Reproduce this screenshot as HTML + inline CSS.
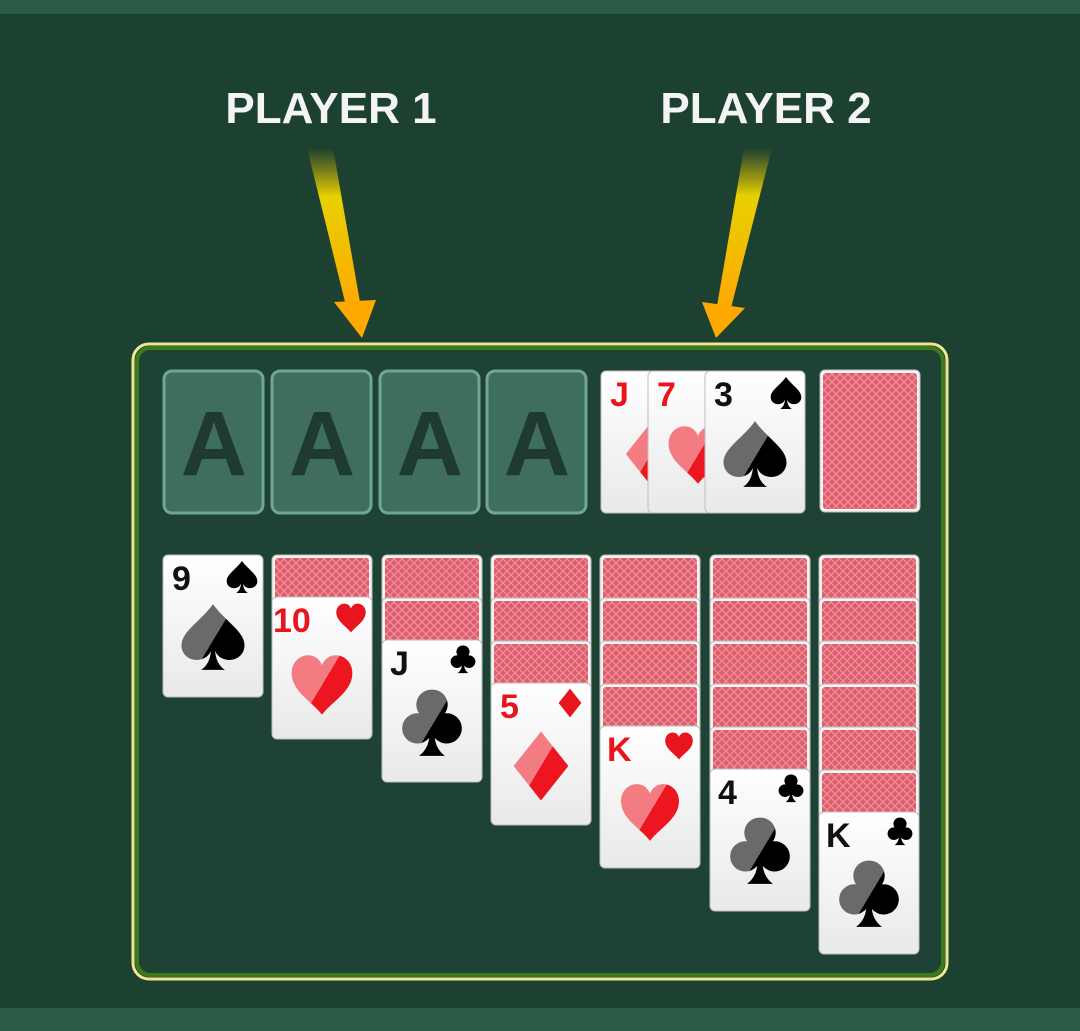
<!DOCTYPE html>
<html><head><meta charset="utf-8"><style>
html,body{margin:0;padding:0;width:1080px;height:1031px;overflow:hidden;background:#1c3f30}
svg{display:block}
.r{font-family:"Liberation Sans",sans-serif;font-weight:bold;font-size:34px}
.rd{fill:#e8141e}.bk{fill:#111}
.pl{font-family:"Liberation Sans",sans-serif;font-weight:bold;font-size:44px;fill:#f4f4f4}
.A{font-family:"Liberation Sans",sans-serif;font-weight:bold;font-size:92px;fill:#1f3a31}
</style></head><body>
<svg width="1080" height="1031" viewBox="0 0 1080 1031" xmlns="http://www.w3.org/2000/svg">
<defs>
<linearGradient id="gb" gradientUnits="userSpaceOnUse" x1="0" y1="25" x2="100" y2="85"><stop offset="0.5" stop-color="#6a6a6a"/><stop offset="0.5" stop-color="#000"/></linearGradient>
<linearGradient id="gr" gradientUnits="userSpaceOnUse" x1="0" y1="20" x2="100" y2="80"><stop offset="0.5" stop-color="#f27c82"/><stop offset="0.5" stop-color="#ec1520"/></linearGradient>
<symbol id="spade" viewBox="0 0 100 100"><path d="M50 3C32 28 5 42 5 62C5 78 22 88 38 80C42 78 45 74 47 70C46 82 42 91 33 97L67 97C58 91 54 82 53 70C55 74 58 78 62 80C78 88 95 78 95 62C95 42 68 28 50 3Z"/></symbol>
<symbol id="heart" viewBox="0 0 100 100"><path d="M50 95C35 75 4 60 4 32C4 15 17 5 29 5C40 5 47 12 50 20C53 12 60 5 71 5C83 5 96 15 96 32C96 60 65 75 50 95Z"/></symbol>
<symbol id="diamond" viewBox="0 0 100 100"><path d="M50 2L88 50L50 98L12 50Z"/></symbol>
<symbol id="club" viewBox="0 0 100 100"><path d="M50 5A21 21 0 0 1 68 38A21 21 0 1 1 54 72C55 82 59 90 68 97L32 97C41 90 45 82 46 72A21 21 0 1 1 32 38A21 21 0 0 1 50 5Z"/></symbol>
<linearGradient id="face" x1="0" y1="0" x2="0" y2="1"><stop offset="0" stop-color="#fff"/><stop offset="1" stop-color="#e9e9e9"/></linearGradient>
<pattern id="hatch" width="8" height="8" patternUnits="userSpaceOnUse"><rect width="8" height="8" fill="#de5d6c"/><path d="M0 0L8 8M8 0L0 8" stroke="#f0909b" stroke-width="1.2"/></pattern>
<linearGradient id="ar" x1="0" y1="0" x2="0" y2="1"><stop offset="0" stop-color="#d8c000" stop-opacity="0"/><stop offset="0.3" stop-color="#e8d000"/><stop offset="1" stop-color="#ffa800"/></linearGradient>
<g id="back"><rect width="100" height="142" rx="5" fill="#f4f4f4" stroke="#bbb"/><rect x="3" y="3" width="94" height="136" rx="3" fill="url(#hatch)"/></g>
<g id="fc"><rect width="100" height="142" rx="5" fill="url(#face)" stroke="#bdbdbd"/></g>
</defs>
<rect width="1080" height="1031" fill="#1d4131"/>
<rect width="1080" height="14" fill="#2b5c47"/>
<rect y="1008" width="1080" height="23" fill="#2b5c47"/>
<text class="pl" x="331" y="123" text-anchor="middle">PLAYER 1</text>
<text class="pl" x="766" y="123" text-anchor="middle">PLAYER 2</text>
<polygon points="307,148 333,148 361,308 347,310" fill="url(#ar)"/>
<polygon points="334,302 376,300 362,338" fill="#ffa800"/>
<polygon points="744,148 772,148 731,308 717,306" fill="url(#ar)"/>
<polygon points="702,302 745,308 716,338" fill="#ffa800"/>
<rect x="133" y="344" width="814" height="635" rx="16" fill="#1e4334" stroke="#f0e68f" stroke-width="3"/>
<rect x="137" y="348" width="806" height="627" rx="13" fill="none" stroke="#3e7a1c" stroke-width="4"/>
<g>
<rect x="164" y="371" width="99" height="142" rx="8" fill="#3f6e5d" stroke="#6fa697" stroke-width="3"/><text class="A" x="214" y="475" text-anchor="middle">A</text>
<rect x="272" y="371" width="99" height="142" rx="8" fill="#3f6e5d" stroke="#6fa697" stroke-width="3"/><text class="A" x="322" y="475" text-anchor="middle">A</text>
<rect x="380" y="371" width="99" height="142" rx="8" fill="#3f6e5d" stroke="#6fa697" stroke-width="3"/><text class="A" x="430" y="475" text-anchor="middle">A</text>
<rect x="487" y="371" width="99" height="142" rx="8" fill="#3f6e5d" stroke="#6fa697" stroke-width="3"/><text class="A" x="537" y="475" text-anchor="middle">A</text>
</g>
<g transform="translate(601,371)"><use href="#fc"/><text class="r rd" x="9" y="35">J</text><use href="#diamond" x="17" y="50" width="66" height="66" fill="url(#gr)"/></g>
<g transform="translate(648,371)"><use href="#fc"/><text class="r rd" x="9" y="35">7</text><use href="#heart" x="14" y="52" width="72" height="64" fill="url(#gr)"/></g>
<g transform="translate(705,371)"><use href="#fc"/><text class="r bk" x="9" y="35">3</text><use href="#spade" x="64" y="5" width="34" height="34" fill="#000"/><use href="#spade" x="15" y="46" width="70" height="74" fill="url(#gb)"/></g>
<use href="#back" x="820" y="370"/>
<g transform="translate(163,555)"><use href="#fc"/><text class="r bk" x="9" y="35">9</text><use href="#spade" x="62" y="5" width="34" height="34" fill="#000"/><use href="#spade" x="15" y="45" width="70" height="74" fill="url(#gb)"/></g>
<use href="#back" x="272" y="555"/>
<g transform="translate(272,597)"><use href="#fc"/><text class="r rd" x="1" y="35">10</text><use href="#heart" x="62" y="5" width="34" height="32" fill="#e8141e"/><use href="#heart" x="14" y="55" width="72" height="66" fill="url(#gr)"/></g>
<use href="#back" x="382" y="555"/><use href="#back" x="382" y="598"/>
<g transform="translate(382,640)"><use href="#fc"/><text class="r bk" x="8" y="35">J</text><use href="#club" x="66" y="4" width="30" height="30" fill="#000"/><use href="#club" x="14" y="46" width="72" height="72" fill="url(#gb)"/></g>
<use href="#back" x="491" y="555"/><use href="#back" x="491" y="598"/><use href="#back" x="491" y="641"/>
<g transform="translate(491,683)"><use href="#fc"/><text class="r rd" x="9" y="35">5</text><use href="#diamond" x="64" y="4" width="30" height="32" fill="#e8141e"/><use href="#diamond" x="14" y="46" width="72" height="74" fill="url(#gr)"/></g>
<use href="#back" x="600" y="555"/><use href="#back" x="600" y="598"/><use href="#back" x="600" y="641"/><use href="#back" x="600" y="684"/>
<g transform="translate(600,726)"><use href="#fc"/><text class="r rd" x="7" y="35">K</text><use href="#heart" x="62" y="5" width="34" height="30" fill="#e8141e"/><use href="#heart" x="14" y="55" width="72" height="63" fill="url(#gr)"/></g>
<use href="#back" x="710" y="555"/><use href="#back" x="710" y="598"/><use href="#back" x="710" y="641"/><use href="#back" x="710" y="684"/><use href="#back" x="710" y="727"/>
<g transform="translate(710,769)"><use href="#fc"/><text class="r bk" x="8" y="35">4</text><use href="#club" x="66" y="4" width="30" height="30" fill="#000"/><use href="#club" x="14" y="44" width="72" height="74" fill="url(#gb)"/></g>
<use href="#back" x="819" y="555"/><use href="#back" x="819" y="598"/><use href="#back" x="819" y="641"/><use href="#back" x="819" y="684"/><use href="#back" x="819" y="727"/><use href="#back" x="819" y="770"/>
<g transform="translate(819,812)"><use href="#fc"/><text class="r bk" x="7" y="35">K</text><use href="#club" x="66" y="4" width="30" height="30" fill="#000"/><use href="#club" x="14" y="44" width="72" height="74" fill="url(#gb)"/></g>
</svg>
</body></html>
